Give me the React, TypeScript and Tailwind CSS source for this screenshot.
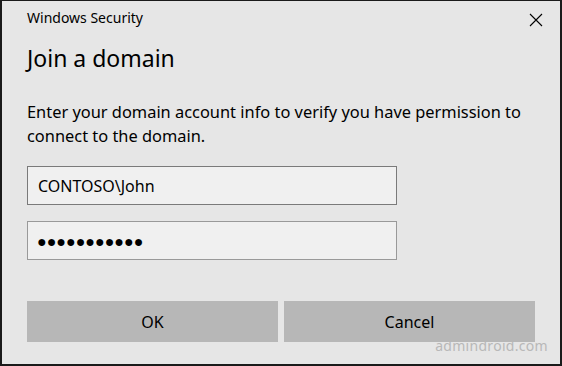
import React from "react";

export default function App() {
  const font = { fontFamily: '"Noto Sans", "Open Sans", sans-serif' };
  return (
    <div
      className="w-[562px] h-[366px] bg-[#e6e6e6] border-l-2 border-r-2 border-b-2 border-t border-[#1a1a1a] flex flex-col text-black relative"
      style={font}
    >
      <div className="flex items-start justify-between pl-[25px] pr-[15px] pt-[7px] h-[36px]">
        <div className="text-[14px] leading-[20px]">Windows Security</div>
        <svg width="14" height="14" viewBox="0 0 14 14" className="mt-[5px] mr-[2px]">
          <path d="M1 1 L13 13 M13 1 L1 13" stroke="#000" strokeWidth="1.1" />
        </svg>
      </div>
      <div className="pl-[25px] pr-[25px]">
        <div className="text-[23px] leading-[30px] mt-[6px]">Join a domain</div>
        <div className="text-[16.4px] leading-[24px] mt-[27px] w-[512px]">
          Enter your domain account info to verify you have permission to connect to the domain.
        </div>
        <div className="mt-[18px] w-[370px] h-[39px] bg-[#f0f0f0] border border-[#7a7a7a] flex items-center pl-[10px] text-[16px]">
          CONTOSO\John
        </div>
        <div className="mt-[16px] w-[370px] h-[39px] bg-[#f0f0f0] border border-[#999999] flex items-center pl-[9px] text-[16px]">
          ●●●●●●●●●●●
        </div>
        <div className="mt-[41px] flex gap-[6px]">
          <div className="w-[251px] h-[41px] bg-[#b7b7b7] flex items-center justify-center text-[16px]">OK</div>
          <div className="w-[251px] h-[41px] bg-[#b7b7b7] flex items-center justify-center text-[16px]">Cancel</div>
        </div>
      </div>
      <div className="absolute right-[12px] bottom-[10px] text-[14px] leading-[16px] text-[#b8b8b8] tracking-[0.3px]">
        admindroid.com
      </div>
    </div>
  );
}
